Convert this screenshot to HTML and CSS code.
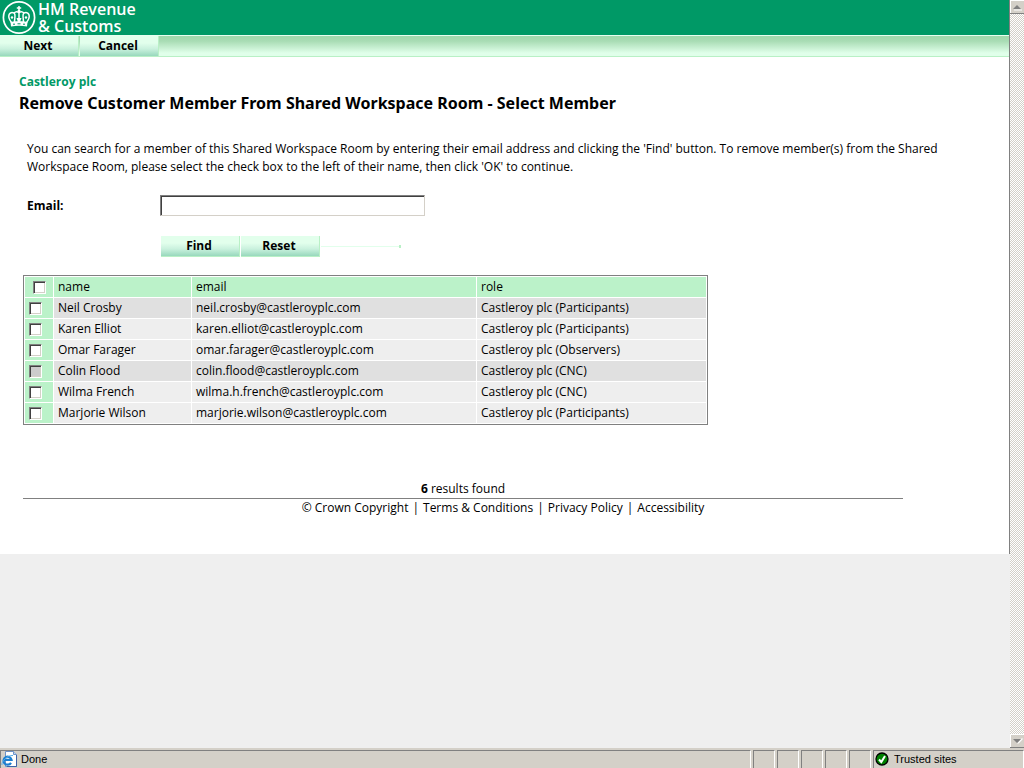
FILE: index.html
```html
<!DOCTYPE html>
<html lang="en">
<head>
<meta charset="utf-8">
<title>Remove Customer Member From Shared Workspace Room</title>
<link rel="stylesheet" href="styles.css">
</head>
<body>
<div class="view">
  <div class="page">
    <header class="banner">
      <svg class="crest" viewBox="0 0 34 34" aria-hidden="true">
        <circle cx="17" cy="17" r="15.6" fill="none" stroke="#fff" stroke-width="1.7"/>
        <g fill="none" stroke="#fff" stroke-width="1.5">
          <path d="M9.500 22C4 15 8 10.500 12 12.500C14 13.500 12.500 18 12.500 22M24.500 22C30 15 26 10.500 22 12.500C20 13.500 21.500 18 21.500 22M12 12.500C14 10.500 16 11 17 12.500C18 11 20 10.500 22 12.500M17 12V21"/>
          <path d="M17 5.500V10M14.800 7.500H19.200"/>
        </g>
        <g fill="#fff"><circle cx="17" cy="10.500" r="1.500"/><circle cx="10" cy="17" r="1.200"/><circle cx="24" cy="17" r="1.200"/><path d="M14.500 17.500h5l-1.500 4h-2zM8.500 21.500Q17 19.500 25.500 21.500L25 26Q17 24.500 9 26z"/></g>
        <path d="M11 23.700h2M15.500 23.300h3M21 23.700h2" stroke="#009966" stroke-width="1"/>
      </svg>
      <div class="brand">HM Revenue<br>&amp; Customs</div>
    </header>
    <nav class="toolbar">
      <button class="btn" type="button">Next</button>
      <button class="btn" type="button">Cancel</button>
    </nav>
    <main class="content">
      <p class="company">Castleroy plc</p>
      <h1 class="title">Remove Customer Member From Shared Workspace Room - Select Member</h1>
      <p class="intro">You can search for a member of this Shared Workspace Room by entering their email address and clicking the 'Find' button. To remove member(s) from the Shared Workspace Room, please select the check box to the left of their name, then click 'OK' to continue.</p>
      <form class="search">
        <div class="field">
          <label class="label" for="email">Email:</label>
          <input class="textbox" id="email" type="text">
        </div>
        <div class="actions">
          <button class="btn" type="button">Find</button>
          <button class="btn" type="reset">Reset</button>
          <span class="tail"></span>
        </div>
      </form>
      <table class="members">
        <colgroup><col class="col-check"><col class="col-name"><col class="col-email"><col class="col-role"></colgroup>
        <thead>
          <tr><th class="all"><input class="check" type="checkbox" aria-label="Select all"></th><th>name</th><th>email</th><th>role</th></tr>
        </thead>
        <tbody>
          <tr class="dark"><td><input class="check" type="checkbox" aria-label="Neil Crosby"></td><td>Neil Crosby</td><td>neil.crosby@castleroyplc.com</td><td>Castleroy plc (Participants)</td></tr>
          <tr><td><input class="check" type="checkbox" aria-label="Karen Elliot"></td><td>Karen Elliot</td><td>karen.elliot@castleroyplc.com</td><td>Castleroy plc (Participants)</td></tr>
          <tr><td><input class="check" type="checkbox" aria-label="Omar Farager"></td><td>Omar Farager</td><td>omar.farager@castleroyplc.com</td><td>Castleroy plc (Observers)</td></tr>
          <tr class="dark"><td><input class="check" type="checkbox" aria-label="Colin Flood" disabled></td><td>Colin Flood</td><td>colin.flood@castleroyplc.com</td><td>Castleroy plc (CNC)</td></tr>
          <tr><td><input class="check" type="checkbox" aria-label="Wilma French"></td><td>Wilma French</td><td>wilma.h.french@castleroyplc.com</td><td>Castleroy plc (CNC)</td></tr>
          <tr><td><input class="check" type="checkbox" aria-label="Marjorie Wilson"></td><td>Marjorie Wilson</td><td>marjorie.wilson@castleroyplc.com</td><td>Castleroy plc (Participants)</td></tr>
        </tbody>
      </table>
      <p class="results"><b>6</b> results found</p>
      <footer class="footer">
        <span>© Crown Copyright</span><span>|</span><a href="#">Terms &amp; Conditions</a><span>|</span><a href="#">Privacy Policy</a><span>|</span><a href="#">Accessibility</a>
      </footer>
    </main>
  </div>
  <div class="scrollbar">
    <button class="arrow" type="button" aria-label="Scroll up"><svg viewBox="0 0 9 6"><path d="M1 5.500h8v1H1z" fill="#fff"/><path d="M0 5L4 1L8 5z" fill="#808080"/></svg></button>
    <button class="arrow" type="button" aria-label="Scroll down"><svg viewBox="0 0 9 6"><path d="M5 5.500L9 1.500v-1z" fill="#fff" stroke="#fff"/><path d="M0 1h8L4 5z" fill="#808080"/></svg></button>
  </div>
</div>
<div class="status">
  <div class="pane pane-main">
    <svg class="status-icon" viewBox="0 0 16 16" aria-hidden="true">
      <path d="M4.500 .500h8l3 3v12H4.500z" fill="#fff" stroke="#6f93c7"/><path d="M12.500 .500v3h3" fill="#bfd5f2" stroke="#6f93c7"/><path d="M15.500 4v11.500H6" fill="none" stroke="#3d62a8"/>
      <path d="M10 11.800A4 4 0 1 1 10.500 8.800H3" fill="none" stroke="#1d7fd0" stroke-width="2.200"/><path d="M1 14C0 11 6 4 12 4.500" fill="none" stroke="#54adeb" stroke-width="1"/>
    </svg>
    <span>Done</span>
  </div>
  <div class="pane pane-small"></div><div class="pane pane-small"></div><div class="pane pane-small"></div><div class="pane pane-small"></div><div class="pane pane-small"></div>
  <div class="pane pane-zone">
    <svg class="status-icon" viewBox="0 0 16 16" aria-hidden="true"><circle cx="8" cy="8" r="6" fill="#008000" stroke="#000" stroke-width="1.300"/><path d="M5 8.500L7.300 11L11 5" fill="none" stroke="#fff" stroke-width="2"/></svg>
    <span>Trusted sites</span>
  </div>
</div>
</body>
</html>
```

FILE: styles.css
```css
* { box-sizing: border-box; }
body {
  margin: 0;
  height: 100vh;
  display: flex;
  flex-direction: column;
  overflow: hidden;
  background: #efefef;
  color: #000;
  font: 12px/18px "Trebuchet MS", "Open Sans", sans-serif;
}
p, h1 { margin: 0; }
button, input { font: inherit; color: inherit; margin: 0; }
.view { flex: 1; min-height: 0; display: flex; }
.page {
  flex: 1;
  align-self: flex-start;
  background: #fff;
  border-right: 1px solid #808080;
}
.banner {
  height: 35px;
  display: flex;
  gap: 2px;
  padding-left: 2px;
  background: #009966;
  color: #fff;
}
.crest { width: 34px; height: 35px; }
.brand { font: 600 16px/17px "Open Sans", sans-serif; padding-top: 1px; }
.toolbar {
  height: 22px;
  display: flex;
  gap: 1px;
  border-top: 1px solid #e6fff0;
  border-bottom: 1px solid #b9f0c6;
  background: linear-gradient(#a0d8ac, #a8dcb4 25%, #e0ffea 85%);
}
.btn {
  width: 79px;
  height: 20px;
  padding: 0 2px 0 0;
  border: 0;
  border-right: 1px solid #b9f0c6;
  background: linear-gradient(#e2ffec 35%, #c9f1dd 65%, #98d8bd);
  font-weight: bold;
  line-height: 18px;
}
.content { padding: 16px 66px 37px 19px; }
.company { color: #009966; font-weight: bold; }
.title { font: bold 16px/24px "Trebuchet MS", "Noto Sans", sans-serif; }
.intro { margin: 25px 0 0 8px; }
.search { margin: 19px 0 0 8px; }
.field { display: flex; }
.label { width: 133px; line-height: 22px; font-weight: bold; }
.textbox {
  width: 265px;
  height: 21px;
  padding: 0 3px;
  border: 1px solid #d4d0c8;
  border-top-color: #808080;
  border-left-color: #808080;
  box-shadow: inset 1px 1px #404040;
  background: #fff;
}
.actions { display: flex; align-items: center; gap: 1px; margin: 19px 0 0 134px; }
.actions .btn { height: 21px; border-bottom: 1px solid #b9f0c6; }
.tail {
  width: 80px;
  height: 3px;
  border-right: 2px solid #b9f0c6;
  background: linear-gradient(#e2ffec, #e2ffec) center / 100% 1px no-repeat;
}
.members {
  margin: 18px 0 0 4px;
  width: 685px;
  table-layout: fixed;
  border: 1px solid #808080;
  border-spacing: 1px;
  line-height: 20px;
}
.col-check { width: 28px; }
.col-name { width: 137px; }
.col-email { width: 284px; }
.members th, .members td { height: 20px; padding: 0 4px; text-align: left; font-weight: normal; background: #eee; }
.members .dark td { background: #e0e0e0; }
.members th, .members td:first-child, .members .dark td:first-child { background: #bbf2c9; }
.members .all { padding-left: 8px; }
.check {
  appearance: none;
  display: block;
  width: 13px;
  height: 13px;
  border: 1px solid #fff;
  border-top-color: #808080;
  border-left-color: #808080;
  background: #fff;
  box-shadow: inset 1px 1px #404040, inset -1px -1px #d4d0c8;
}
.check:disabled { background: #ccc; }
.results { margin: 55px 0 0 4px; max-width: 880px; text-align: center; }
.footer {
  margin-left: 4px;
  max-width: 880px;
  display: flex;
  gap: 4px;
  justify-content: center;
  padding-left: 80px;
  border-top: 1px solid #808080;
}
.footer a { color: inherit; text-decoration: none; }
.scrollbar {
  width: 14px;
  display: flex;
  flex-direction: column;
  justify-content: space-between;
  background: repeating-conic-gradient(#d4d0c8 0 25%, #fff 0 50%) 0 0 / 2px 2px;
}
.arrow {
  height: 14px;
  padding: 0;
  display: grid;
  place-items: center;
  border: 0;
  border-bottom: 1px solid #808080;
  background: #d4d0c8;
  box-shadow: inset 1px 1px #fff;
}
.arrow svg { width: 9px; height: 6px; overflow: visible; }
.status {
  height: 20px;
  display: flex;
  gap: 2px;
  padding-top: 2px;
  background: #d4d0c8;
  font: 11px/17px Tahoma, "Liberation Sans", sans-serif;
}
.pane {
  display: flex;
  gap: 4px;
  border: 1px solid #808080;
  border-right-color: #fff;
  border-bottom: 0;
}
.pane-main { flex: 1; }
.pane-small { width: 22px; }
.pane-zone { width: 151px; }
.status-icon { width: 16px; height: 16px; }
```
